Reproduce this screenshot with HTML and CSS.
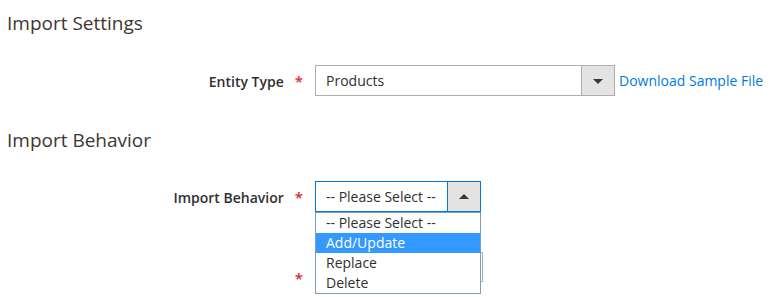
FILE: index.html
```html
<!DOCTYPE html>
<html>
  <head>
    <meta charset="UTF-8">
    <title>Import</title>
    <link rel="stylesheet" href="styles.css">
  </head>
  <body>
    <div class="page">
      <h2 class="legend">Import Settings</h2>
      <div class="field">
        <label class="label">Entity Type</label>
        <div class="control">
          <div class="select wide">
            <span class="value">Products</span>
            <span class="toggle"><span class="arrow down"></span></span>
          </div>
          <a class="link" href="#">Download Sample File</a>
        </div>
      </div>

      <h2 class="legend second">Import Behavior</h2>
      <div class="field">
        <label class="label">Import Behavior</label>
        <div class="control">
          <div class="select narrow open">
            <span class="value">-- Please Select --</span>
            <span class="toggle"><span class="arrow up"></span></span>
            <ul class="options">
              <li>-- Please Select --</li>
              <li class="active">Add/Update</li>
              <li>Replace</li>
              <li>Delete</li>
            </ul>
          </div>
        </div>
      </div>
      <div class="field next">
        <label class="label"></label>
        <div class="control">
          <div class="input"></div>
        </div>
      </div>
    </div>
  </body>
</html>
```

FILE: styles.css
```css
/* Base */
body {
  margin: 0;
  background: #fff;
  font-family: "Open Sans", sans-serif;
  font-size: 14px;
  color: #303030;
}

.page {
  padding: 0 0 0 7px;
  min-height: 297px;
  box-sizing: border-box;
}

/* Section titles */
.legend {
  margin: 0;
  padding-top: 10px;
  font-size: 19px;
  font-weight: 400;
  line-height: 26px;
  color: #41362f;
}

.legend.second {
  padding-top: 0;
  margin-top: 31px;
}

/* Form rows */
.field {
  display: flex;
  align-items: center;
  margin-top: 29px;
}

.legend.second + .field {
  margin-top: 28px;
}

.label {
  width: 296px;
  text-align: right;
  font-weight: 600;
  color: #303030;
  box-sizing: border-box;
}

.label::after {
  content: "*";
  color: #e22626;
  font-size: 15px;
  margin-left: 11px;
}

.control {
  display: flex;
  align-items: center;
  margin-left: 12px;
}

/* Select look */
.select {
  position: relative;
  display: flex;
  height: 31px;
  box-sizing: border-box;
  border: 1px solid #adadad;
  background: #fff;
}

.select.wide {
  width: 300px;
}

.select.narrow {
  width: 166px;
}

.select.open {
  border-color: #007bdb;
}

.value {
  flex: 1;
  padding-left: 10px;
  line-height: 29px;
  white-space: nowrap;
}

.toggle {
  width: 32px;
  border-left: 1px solid #adadad;
  background: #e3e3e3;
  display: flex;
  align-items: center;
  justify-content: center;
}

.select.open .toggle {
  border-left-color: #007bdb;
}

.arrow {
  width: 0;
  height: 0;
  border-left: 5px solid transparent;
  border-right: 5px solid transparent;
}

.arrow.down {
  border-top: 5px solid #41362f;
  margin-top: 2px;
}

.arrow.up {
  border-bottom: 5px solid #41362f;
}

.link {
  margin-left: 4px;
  color: #007bdb;
  text-decoration: none;
  white-space: nowrap;
}

/* Open list sits over the next field */
.options {
  position: absolute;
  z-index: 2;
  left: -1px;
  top: 30px;
  width: 166px;
  box-sizing: border-box;
  margin: 0;
  padding: 0;
  list-style: none;
  border: 1px solid #7f9db9;
  background: #fff;
}

.options li {
  height: 20px;
  line-height: 20px;
  padding-left: 10px;
  color: #303030;
}

.options li.active {
  background: #3399ff;
  color: #fff;
}

/* The field hidden under the list */
.field.next {
  margin-top: 40px;
  align-items: flex-end;
}

.field.next .label::after {
  position: relative;
  top: 6px;
}

.input {
  width: 168px;
  height: 30px;
  box-sizing: border-box;
  border: 1px solid #adadad;
}
```
